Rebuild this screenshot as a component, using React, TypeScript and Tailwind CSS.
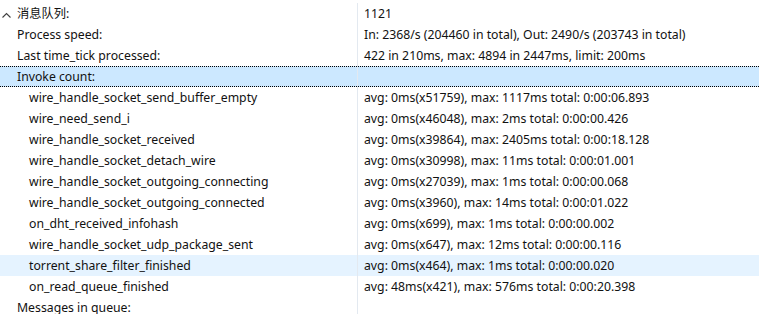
const rows: { label: string; value: string; level: number; state?: "selected" | "hover"; expander?: boolean }[] = [
  { label: "消息队列:", value: "1121", level: 0, expander: true },
  { label: "Process speed:", value: "In: 2368/s (204460 in total), Out: 2490/s (203743 in total)", level: 1 },
  { label: "Last time_tick processed:", value: "422 in 210ms, max: 4894 in 2447ms, limit: 200ms", level: 1 },
  { label: "Invoke count:", value: "", level: 1, state: "selected" },
  { label: "wire_handle_socket_send_buffer_empty", value: "avg: 0ms(x51759), max: 1117ms total: 0:00:06.893", level: 2 },
  { label: "wire_need_send_i", value: "avg: 0ms(x46048), max: 2ms total: 0:00:00.426", level: 2 },
  { label: "wire_handle_socket_received", value: "avg: 0ms(x39864), max: 2405ms total: 0:00:18.128", level: 2 },
  { label: "wire_handle_socket_detach_wire", value: "avg: 0ms(x30998), max: 11ms total: 0:00:01.001", level: 2 },
  { label: "wire_handle_socket_outgoing_connecting", value: "avg: 0ms(x27039), max: 1ms total: 0:00:00.068", level: 2 },
  { label: "wire_handle_socket_outgoing_connected", value: "avg: 0ms(x3960), max: 14ms total: 0:00:01.022", level: 2 },
  { label: "on_dht_received_infohash", value: "avg: 0ms(x699), max: 1ms total: 0:00:00.002", level: 2 },
  { label: "wire_handle_socket_udp_package_sent", value: "avg: 0ms(x647), max: 12ms total: 0:00:00.116", level: 2 },
  { label: "torrent_share_filter_finished", value: "avg: 0ms(x464), max: 1ms total: 0:00:00.020", level: 2, state: "hover" },
  { label: "on_read_queue_finished", value: "avg: 48ms(x421), max: 576ms total: 0:00:20.398", level: 2 },
  { label: "Messages in queue:", value: "", level: 1 },
];

function Chevron() {
  return (
    <svg width="9" height="6" viewBox="0 0 9 6" className="absolute left-[2px] top-[9px]">
      <path d="M0.5 5.5 L4.5 1.5 L8.5 5.5" fill="none" stroke="#404040" strokeWidth="1.1" />
    </svg>
  );
}

export default function App() {
  return (
    <div
      className="w-[759px] h-[314px] overflow-hidden bg-white pt-[3px] text-[12.25px] text-[#111]"
      style={{ fontFamily: '"Noto Sans", "Noto Sans CJK SC", sans-serif' }}
    >
      {rows.map((r, i) => (
        <div
          key={i}
          className={
            "flex h-[21px] " +
            (r.state === "selected"
              ? "bg-[#cce8ff] border-y border-dotted border-black leading-[20px]"
              : r.state === "hover"
              ? "bg-[#e5f3ff] leading-[22px]"
              : "leading-[22px]")
          }
        >
          <div
            className={
              "relative w-[358px] shrink-0 border-r border-[#e3e9f0] whitespace-nowrap " +
              (r.level === 2 ? "pl-[29px]" : "pl-[17px]")
            }
          >
            {r.expander && <Chevron />}
            {r.label}
          </div>
          <div className="pl-[6px] whitespace-nowrap">{r.value}</div>
        </div>
      ))}
    </div>
  );
}
